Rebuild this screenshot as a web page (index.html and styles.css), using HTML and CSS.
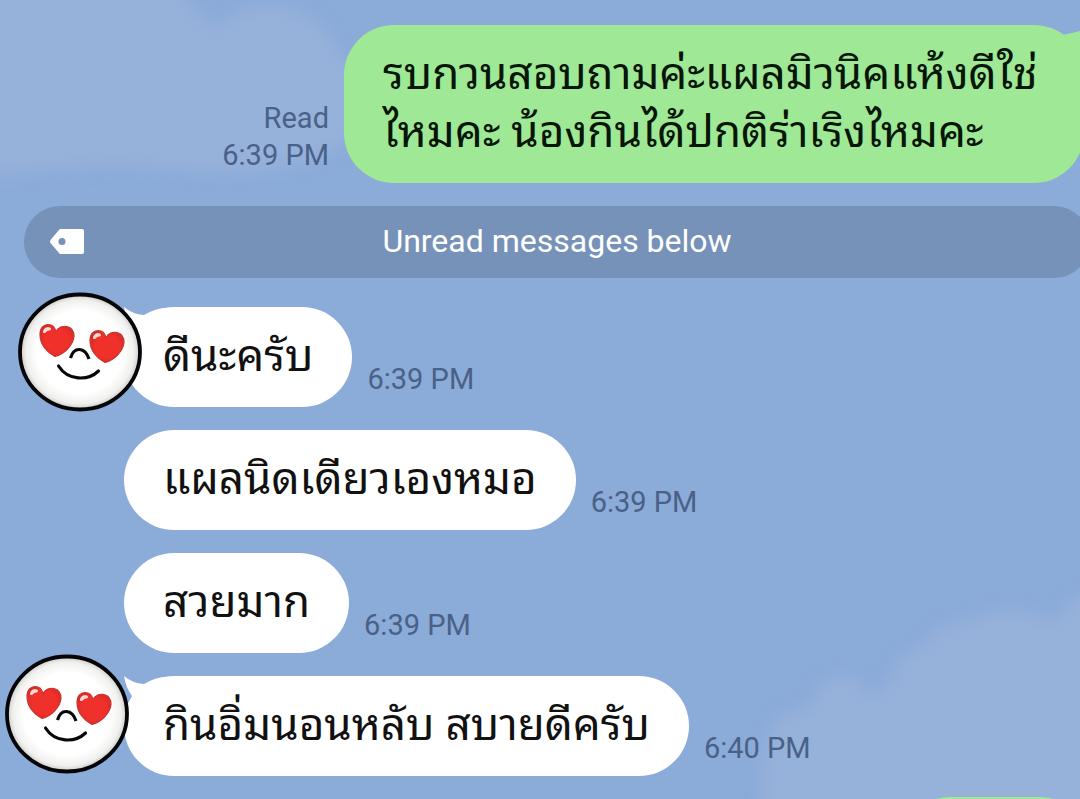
FILE: index.html
```html
<!DOCTYPE html>
<html lang="th">
<head>
<meta charset="utf-8">
<meta name="viewport" content="width=device-width, initial-scale=1">
<title>Chat</title>
<link rel="stylesheet" href="styles.css">
</head>
<body>
<svg class="sky" viewBox="0 0 1080 799" preserveAspectRatio="none" aria-hidden="true">
  <g class="clouds">
    <path d="M-30 -30H165Q190 5 216 28Q236 6 272 5Q318 8 338 50Q375 90 350 140Q300 180 190 172Q100 160 -30 180Z"/>
    <path d="M760 830L762 770Q765 725 785 712Q810 716 818 686Q840 668 862 682L870 700Q880 684 892 682Q893 655 920 648Q940 620 970 620Q1005 603 1038 615Q1055 625 1062 614Q1070 590 1110 590V830Z"/>
  </g>
</svg>
<svg class="defs" aria-hidden="true">
  <defs>
    <radialGradient id="skin" cx="50%" cy="50%" r="50%">
      <stop offset="0.72" stop-color="#fff"/>
      <stop offset="0.9" stop-color="#f0f0ee"/>
      <stop offset="1" stop-color="#c9c9c6"/>
    </radialGradient>
    <radialGradient id="red" cx="50%" cy="50%" r="60%">
      <stop offset="0.6" stop-color="#f0302a"/>
      <stop offset="1" stop-color="#cf2a25"/>
    </radialGradient>
    <symbol id="heart" viewBox="0 0 36 34">
      <path d="M16 33C8 29 1 21 1 11C1 4 5 1 9 1C13 1 16 4 17 8C19 4 24 2 28 3C33 4 35 8 35 13C34 22 25 31 16 33Z" fill="url(#red)" stroke="#c93430" stroke-width="1.2"/>
      <path d="M4 9C4 5 7 3 11 4C13 5 12 7 10 7C7 7 7 11 4 9Z" fill="#ffd9d4"/>
    </symbol>
    <symbol id="face" viewBox="0 0 124 120">
      <ellipse cx="62" cy="60" rx="60" ry="57.500" fill="url(#skin)" stroke="#060608" stroke-width="3.800"/>
      <use href="#heart" x="21" y="31" width="36" height="35"/>
      <use href="#heart" x="71" y="37" width="36" height="35"/>
      <path d="M52.500 66C56 54 67 55 71 67" fill="none" stroke="#080808" stroke-width="3.200"/>
      <path d="M40.500 74C50 89 70 89 80.500 79" fill="none" stroke="#080808" stroke-width="3.200" stroke-linecap="round"/>
    </symbol>
  </defs>
</svg>
<main class="chat">
  <article class="row sent">
    <div class="meta"><span>Read</span><time>6:39 PM</time></div>
    <p class="bubble green">รบกวนสอบถามค่ะแผลมิวนิคแห้งดีใช่<br>ไหมคะ น้องกินได้ปกติร่าเริงไหมคะ
      <svg class="tail-right" viewBox="0 0 30 30" aria-hidden="true"><path d="M0 6Q10 5 18 3L30 0V30H0Z"/></svg>
    </p>
  </article>
  <div class="unread">
    <svg class="tag" viewBox="0 0 34 26" aria-hidden="true"><path fill-rule="evenodd" d="M10.500 0H32Q34 0 34 2V23Q34 25 32 25H10.500Q9.500 25 9 24L0.500 14Q-0.500 12.500 0.500 11L9 1Q9.500 0 10.500 0ZM12 9A3.500 3.500 0 1 0 12 16A3.500 3.500 0 1 0 12 9Z"/></svg>
    <span>Unread messages below</span>
  </div>
  <article class="row">
    <p class="bubble">ดีนะครับ
      <svg class="tail-left" viewBox="0 0 40 40" aria-hidden="true"><path d="M0 0Q8 7 20 8Q30 2 40 1V40L2 34Q4 26 8 20Q2 12 0 0Z"/></svg>
    </p>
    <time class="meta">6:39 PM</time>
    <svg class="avatar first" role="img" aria-label="Contact"><use href="#face"/></svg>
  </article>
  <article class="row"><p class="bubble">แผลนิดเดียวเองหมอ</p><time class="meta">6:39 PM</time></article>
  <article class="row"><p class="bubble">สวยมาก</p><time class="meta">6:39 PM</time></article>
  <article class="row">
    <p class="bubble">กินอิ่มนอนหลับ สบายดีครับ
      <svg class="tail-left" viewBox="0 0 40 40" aria-hidden="true"><path d="M0 0Q8 7 20 8Q30 2 40 1V40L2 34Q4 26 8 20Q2 12 0 0Z"/></svg>
    </p>
    <time class="meta">6:40 PM</time>
    <svg class="avatar last" role="img" aria-label="Contact"><use href="#face"/></svg>
  </article>
  <div class="next"></div>
</main>
</body>
</html>
```
FILE: styles.css
```css
* { box-sizing: border-box; }
body {
  margin: 0;
  min-height: 100vh;
  overflow: hidden;
  background: #8babd9;
  color: #111;
  font-family: Roboto, "Noto Sans Thai Looped", "Noto Sans Thai", sans-serif;
}
.sky { position: absolute; inset: 0; width: 100%; height: 100%; z-index: -1; }
.clouds { fill: #96b1da; filter: blur(8px); }
.defs { position: absolute; width: 0; height: 0; }
.chat {
  display: flex;
  flex-direction: column;
  gap: 23px;
  padding: 25px 0 0 124px;
  height: 100vh;
  overflow: hidden;
}
.row { position: relative; display: flex; align-items: flex-end; gap: 15px; flex: none; }
.bubble {
  position: relative;
  margin: 0;
  padding: 20px 39px 22px;
  border-radius: 50px;
  background: #fff;
  font-size: 44px;
  line-height: 58px;
  white-space: nowrap;
}
.meta {
  padding-bottom: 9px;
  color: #4a6187;
  font-size: 29px;
  line-height: 37px;
  white-space: nowrap;
}
.sent { justify-content: flex-end; margin-right: -4px; }
.sent .meta { display: flex; flex-direction: column; align-items: flex-end; }
.green { min-width: 740px; background: #9ee896; color: #071507; }
.unread {
  position: relative;
  flex: none;
  display: flex;
  align-items: center;
  justify-content: center;
  height: 72px;
  margin: 0 -10px 6px -100px;
  padding-bottom: 2px;
  border-radius: 36px;
  background: #7692b9;
  color: #fff;
  font-size: 32px;
  line-height: 40px;
}
.tag { position: absolute; left: 26px; top: 23px; width: 34px; height: 26px; fill: #fff; }
.tail-left { position: absolute; left: 0; top: 0; width: 40px; height: 40px; fill: #fff; }
.tail-right { position: absolute; right: 0; top: 5px; width: 30px; height: 30px; fill: #9ee896; }
.avatar { position: absolute; width: 124px; height: 120px; }
.first { left: -106px; top: -15px; }
.last { left: -119px; top: -22px; }
.next {
  flex: none;
  align-self: flex-end;
  width: 190px;
  height: 100px;
  margin: -2px -10px 0 0;
  border-radius: 50px;
  background: #9ee896;
}
```
